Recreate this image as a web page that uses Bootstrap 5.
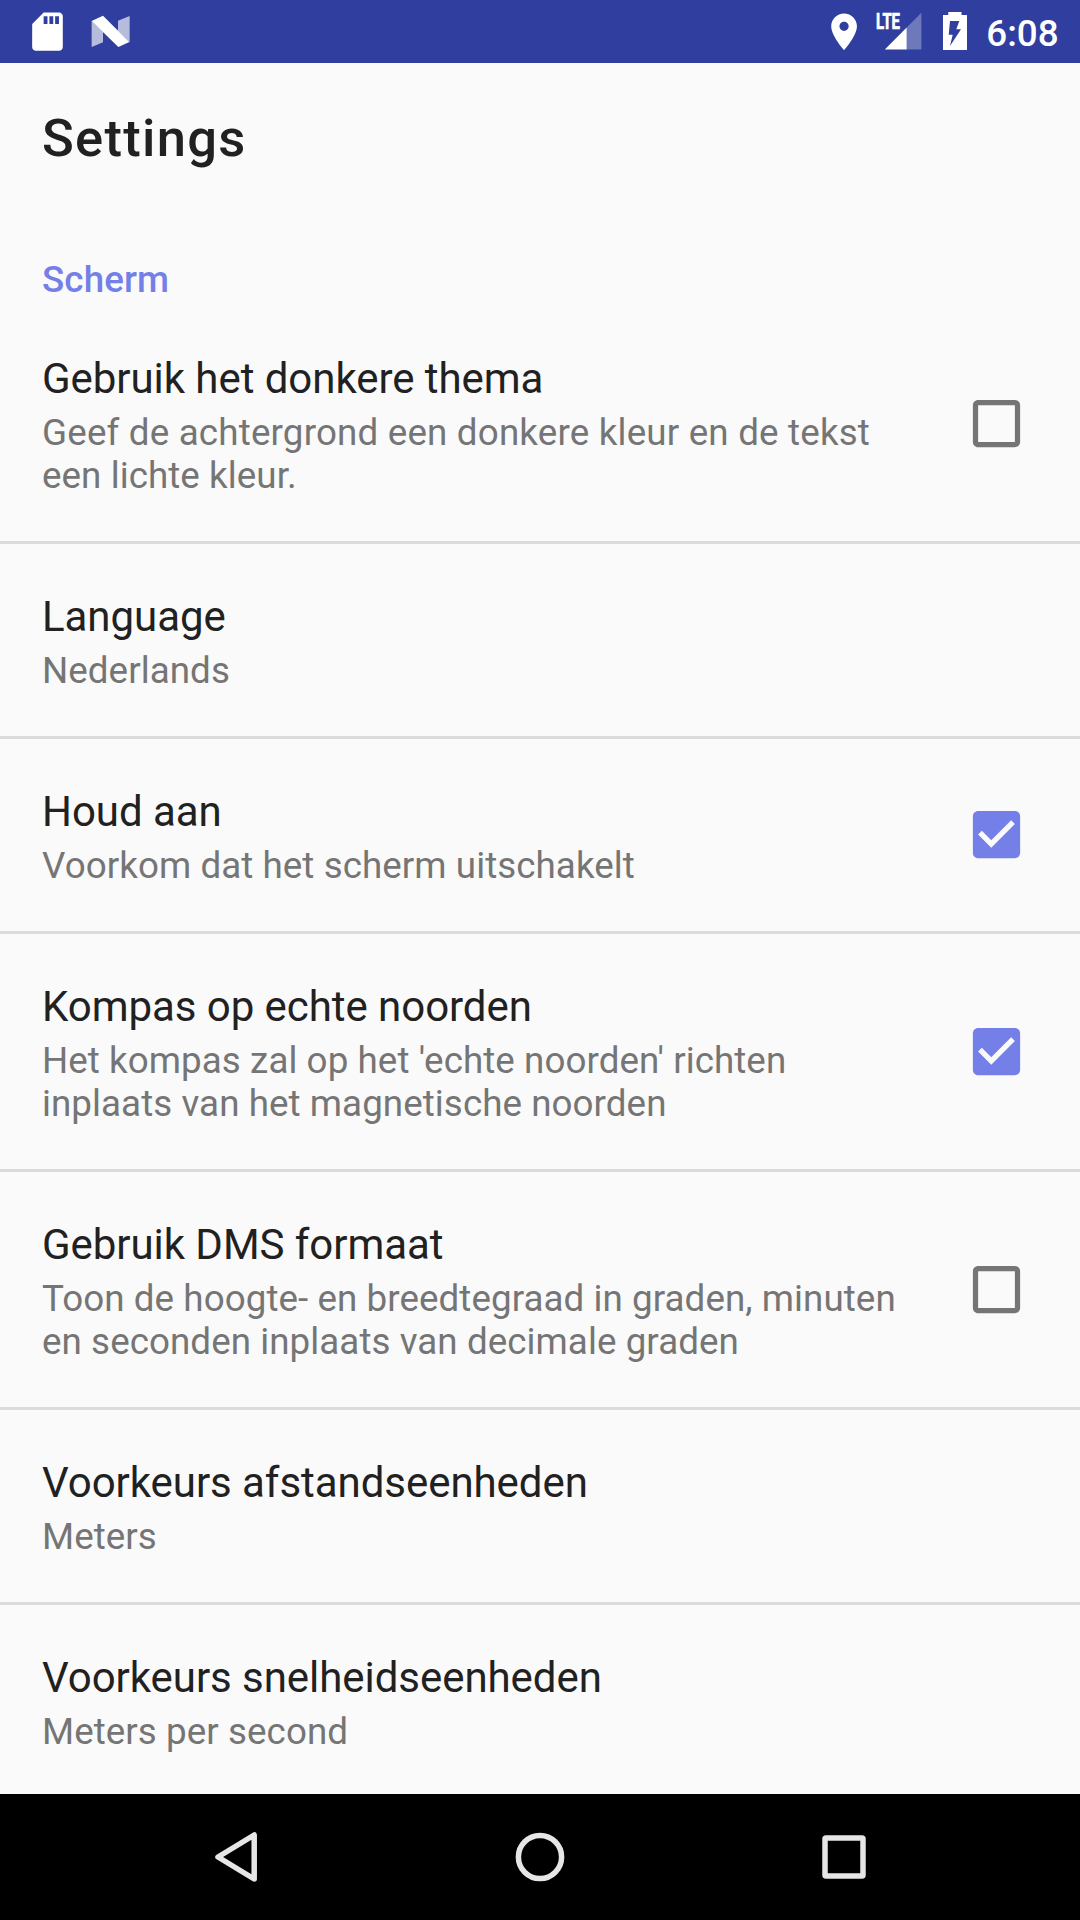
<!DOCTYPE html>
<html lang="nl">
<head>
<meta charset="utf-8">
<meta name="viewport" content="width=device-width, initial-scale=1">
<title>Settings</title>
<link href="https://cdn.jsdelivr.net/npm/bootstrap@5.3.0/dist/css/bootstrap.min.css" rel="stylesheet">
<style>
  body { font-family: Roboto, "Noto Sans", sans-serif; background: #fafafa; color: #212121; }
  .screen { width: 1080px; height: 1920px; }
  .statusbar { height: 63px; background: #303f9f; }
  .statusbar svg, .navkeys svg, .tick svg { display: block; }
  .appbar { height: 147px; padding: 2px 42px 0; }
  .appbar h1 { font-size: 52.5px; font-weight: 500; line-height: 62px; letter-spacing: 1.3px; }
  .section-title { height: 96px; padding: 48px 42px 0; font-size: 36.75px; font-weight: 500; line-height: 43px; letter-spacing: .1px; color: #757fe8; }
  .pref { padding: 48px 42px 44px; border-bottom: 3px solid #dbdbdb; }
  .pref:last-child { border-bottom: 0; }
  .pref-name { font-size: 42px; line-height: 49px; margin-bottom: 8px; letter-spacing: -.05px; }
  .pref-info { font-size: 36.75px; line-height: 43px; letter-spacing: .065px; color: #757575; }
  .pref-info .loose { letter-spacing: .18px; }
  .tick { width: 73.5px; margin: -49px 0 -44px; }
  .navkeys { height: 126px; background: #000; }
</style>
</head>
<body>
<div class="screen d-flex flex-column overflow-hidden">
  <header class="statusbar flex-shrink-0">
    <svg width="1080" height="63" viewBox="0 0 1080 63" fill="#fff">
      <path transform="translate(24.5 8.7) scale(1.915)" d="M18 2h-8L4.02 8 4 20c0 1.1.9 2 2 2h12c1.1 0 2-.9 2-2V4c0-1.1-.9-2-2-2zm-6 6h-2V4h2v4zm3 0h-2V4h2v4zm3 0h-2V4h2v4z"/>
      <g transform="scale(.33333)">
        <path opacity=".65" d="M275 62V141L309 127V95ZM354 62L389 48V127L354 93Z"/>
        <path d="M275 63L309 47L388 126L355 141Z"/>
      </g>
      <path transform="translate(822 9.8) scale(1.84)" d="M12 2C8.13 2 5 5.13 5 9c0 5.25 7 13 7 13s7-7.75 7-13c0-3.87-3.13-7-7-7zm0 9.5c-1.38 0-2.5-1.12-2.5-2.5s1.12-2.5 2.5-2.5 2.5 1.12 2.5 2.5-1.12 2.5-2.5 2.5z"/>
      <text x="876" y="29" font-size="22" font-weight="700" textLength="24" lengthAdjust="spacingAndGlyphs" stroke="#fff" stroke-width=".7">LTE</text>
      <path opacity=".3" d="M906.7 27.6L921.4 12.8V49.5H906.7Z"/>
      <path d="M884.8 49.5L906.7 27.6V49.5Z"/>
      <path d="M943 15H948.3V12H961.5V15H967V50H943Z"/>
      <path fill="#303f9f" d="M950 21H959.3L956.3 29.3H961L950 46L952.7 34.7H948.7Z"/>
      <text x="986.3" y="46" font-size="36.75" font-weight="500">6:08</text>
    </svg>
  </header>

  <main class="flex-grow-1 overflow-hidden">
    <div class="appbar d-flex align-items-center"><h1 class="m-0">Settings</h1></div>
    <h2 class="section-title m-0">Scherm</h2>
    <div class="pref d-flex justify-content-between align-items-center">
      <div><div class="pref-name">Gebruik het donkere thema</div><div class="pref-info"><span class="loose">Geef de achtergrond een donkere kleur en de tekst</span><br>een lichte kleur.</div></div>
      <div class="tick"><svg width="63" height="63" viewBox="0 0 24 24" fill="#757575"><path d="M19 5v14H5V5h14m0-2H5c-1.1 0-2 .9-2 2v14c0 1.1.9 2 2 2h14c1.1 0 2-.9 2-2V5c0-1.1-.9-2-2-2z"/></svg></div>
    </div>
    <div class="pref">
      <div class="pref-name">Language</div><div class="pref-info">Nederlands</div>
    </div>
    <div class="pref d-flex justify-content-between align-items-center">
      <div><div class="pref-name">Houd aan</div><div class="pref-info">Voorkom dat het scherm uitschakelt</div></div>
      <div class="tick"><svg width="63" height="63" viewBox="0 0 24 24" fill="#757fe8"><path d="M19 3H5c-1.1 0-2 .9-2 2v14c0 1.1.9 2 2 2h14c1.1 0 2-.9 2-2V5c0-1.1-.9-2-2-2zm-9 14l-5-5 1.41-1.41L10 14.17l7.59-7.59L19 8l-9 9z"/></svg></div>
    </div>
    <div class="pref d-flex justify-content-between align-items-center">
      <div><div class="pref-name">Kompas op echte noorden</div><div class="pref-info">Het kompas zal op het 'echte noorden' richten<br>inplaats van het magnetische noorden</div></div>
      <div class="tick"><svg width="63" height="63" viewBox="0 0 24 24" fill="#757fe8"><path d="M19 3H5c-1.1 0-2 .9-2 2v14c0 1.1.9 2 2 2h14c1.1 0 2-.9 2-2V5c0-1.1-.9-2-2-2zm-9 14l-5-5 1.41-1.41L10 14.17l7.59-7.59L19 8l-9 9z"/></svg></div>
    </div>
    <div class="pref d-flex justify-content-between align-items-center">
      <div><div class="pref-name">Gebruik DMS formaat</div><div class="pref-info">Toon de hoogte- en breedtegraad in graden, minuten<br>en seconden inplaats van decimale graden</div></div>
      <div class="tick"><svg width="63" height="63" viewBox="0 0 24 24" fill="#757575"><path d="M19 5v14H5V5h14m0-2H5c-1.1 0-2 .9-2 2v14c0 1.1.9 2 2 2h14c1.1 0 2-.9 2-2V5c0-1.1-.9-2-2-2z"/></svg></div>
    </div>
    <div class="pref">
      <div class="pref-name">Voorkeurs afstandseenheden</div><div class="pref-info">Meters</div>
    </div>
    <div class="pref">
      <div class="pref-name">Voorkeurs snelheidseenheden</div><div class="pref-info">Meters per second</div>
    </div>
  </main>

  <footer class="navkeys flex-shrink-0">
    <svg width="1080" height="126" viewBox="0 0 1080 126" fill="none" stroke="#e6e6e6" stroke-width="5.5" stroke-linejoin="round">
      <path d="M254.2 41V85L218 63Z"/>
      <circle cx="540" cy="63" r="21.6"/>
      <rect x="825" y="44" width="38" height="38" rx="1"/>
    </svg>
  </footer>
</div>
<script src="https://cdn.jsdelivr.net/npm/bootstrap@5.3.0/dist/js/bootstrap.bundle.min.js"></script>
</body>
</html>
